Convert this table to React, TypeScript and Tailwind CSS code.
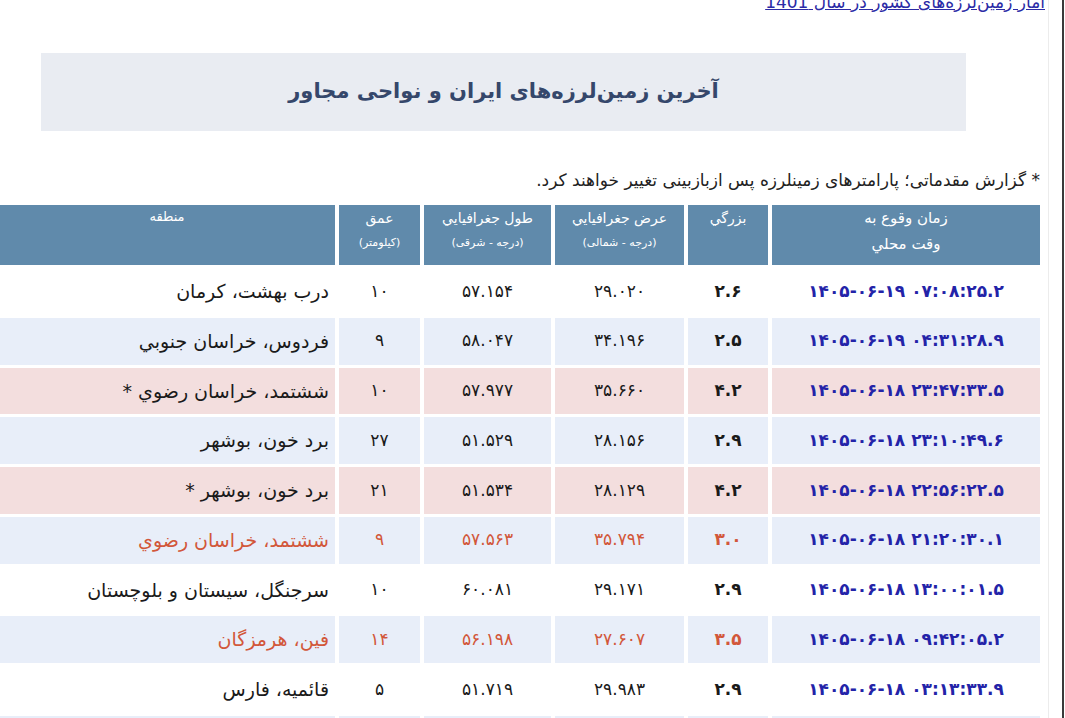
import React from "react";

type Row = {
  time: string;
  mag: string;
  lat: string;
  lon: string;
  depth: string;
  region: string;
  bg: "white" | "blue" | "pink";
  hot?: boolean;
};

const rows: Row[] = [
  { time: "۱۴۰۵-۰۶-۱۹ ۰۷:۰۸:۲۵.۲", mag: "۲.۶", lat: "۲۹.۰۲۰", lon: "۵۷.۱۵۴", depth: "۱۰", region: "درب بهشت، کرمان", bg: "white" },
  { time: "۱۴۰۵-۰۶-۱۹ ۰۴:۳۱:۲۸.۹", mag: "۲.۵", lat: "۳۴.۱۹۶", lon: "۵۸.۰۴۷", depth: "۹", region: "فردوس، خراسان جنوبي", bg: "blue" },
  { time: "۱۴۰۵-۰۶-۱۸ ۲۳:۴۷:۳۳.۵", mag: "۴.۲", lat: "۳۵.۶۶۰", lon: "۵۷.۹۷۷", depth: "۱۰", region: "ششتمد، خراسان رضوي *", bg: "pink" },
  { time: "۱۴۰۵-۰۶-۱۸ ۲۳:۱۰:۴۹.۶", mag: "۲.۹", lat: "۲۸.۱۵۶", lon: "۵۱.۵۲۹", depth: "۲۷", region: "برد خون، بوشهر", bg: "blue" },
  { time: "۱۴۰۵-۰۶-۱۸ ۲۲:۵۶:۲۲.۵", mag: "۴.۲", lat: "۲۸.۱۲۹", lon: "۵۱.۵۳۴", depth: "۲۱", region: "برد خون، بوشهر *", bg: "pink" },
  { time: "۱۴۰۵-۰۶-۱۸ ۲۱:۲۰:۳۰.۱", mag: "۳.۰", lat: "۳۵.۷۹۴", lon: "۵۷.۵۶۳", depth: "۹", region: "ششتمد، خراسان رضوي", bg: "blue", hot: true },
  { time: "۱۴۰۵-۰۶-۱۸ ۱۳:۰۰:۰۱.۵", mag: "۲.۹", lat: "۲۹.۱۷۱", lon: "۶۰.۰۸۱", depth: "۱۰", region: "سرجنگل، سيستان و بلوچستان", bg: "white" },
  { time: "۱۴۰۵-۰۶-۱۸ ۰۹:۴۲:۰۵.۲", mag: "۳.۵", lat: "۲۷.۶۰۷", lon: "۵۶.۱۹۸", depth: "۱۴", region: "فين، هرمزگان", bg: "blue", hot: true },
  { time: "۱۴۰۵-۰۶-۱۸ ۰۳:۱۳:۳۳.۹", mag: "۲.۹", lat: "۲۹.۹۸۳", lon: "۵۱.۷۱۹", depth: "۵", region: "قائميه، فارس", bg: "white" },
  { time: "", mag: "", lat: "", lon: "", depth: "", region: "", bg: "blue" },
];

const bgClass = (b: Row["bg"]) =>
  b === "white" ? "bg-white" : b === "blue" ? "bg-[#e8eef9]" : "bg-[#f3dede]";

export default function App() {
  return (
    <div
      className="relative h-[718px] w-[1065px] overflow-hidden bg-white"
      style={{ fontFamily: '"DejaVu Sans", "Noto Sans", sans-serif' }}
    >
      <div className="flex h-full">
        <div className="h-full w-[1049px] border-r border-[#ececec]" dir="rtl">
          <div className="mt-[-8px] pr-[3px] text-[17px] leading-[20px]">
            <a className="text-[#2b2ba6] underline" href="#">
              آمار زمین‌لرزه‌های کشور در سال <span dir="ltr">1401</span>
            </a>
          </div>
          <div className="mt-[41px] ml-[41px] mr-[82px] flex h-[78px] items-center justify-center bg-[#e9ecf2]">
            <h1 className="text-[21px] font-bold text-[#35476b]">آخرین زمین‌لرزه‌های ایران و نواحی مجاور</h1>
          </div>
          <p className="mt-[38px] pr-[8px] text-[17px] leading-[22px] text-[#222]">
            * گزارش مقدماتی؛ پارامترهای زمینلرزه پس ازبازبینی تغییر خواهند کرد.
          </p>
          <table className="mt-[11px] mr-[4px] w-[1049px] table-fixed border-separate border-spacing-x-[4px] border-spacing-y-[3px]">
            <thead>
              <tr className="h-[60px] bg-[#608aab] text-white">
                <th className="w-[268px] bg-[#608aab] align-top text-[15px] font-normal leading-[26px]">
                  زمان وقوع به
                  <br />
                  وقت محلي
                </th>
                <th className="w-[80px] bg-[#608aab] align-top pt-[2px] text-[14px] font-normal leading-[22px]">بزرگي</th>
                <th className="w-[129px] bg-[#608aab] align-top pt-[2px] text-[14px] font-normal leading-[22px]">
                  عرض جغرافیایي
                  <div className="mt-[7px] text-[11px] leading-[14px]">(درجه - شمالی)</div>
                </th>
                <th className="w-[127px] bg-[#608aab] align-top pt-[2px] text-[14px] font-normal leading-[22px]">
                  طول جغرافیایي
                  <div className="mt-[7px] text-[11px] leading-[14px]">(درجه - شرقی)</div>
                </th>
                <th className="w-[81px] bg-[#608aab] align-top pt-[2px] text-[14px] font-normal leading-[22px]">
                  عمق
                  <div className="mt-[7px] text-[11px] leading-[14px]">(کیلومتر)</div>
                </th>
                <th className="w-[336px] bg-[#608aab] align-top pt-[1px] text-[13px] font-normal leading-[22px]">منطقه</th>
              </tr>
            </thead>
            <tbody>
              {rows.map((r, i) => {
                const c = bgClass(r.bg);
                const txt = r.hot ? "text-[#d2573a]" : "text-[#1a1a1a]";
                return (
                  <tr key={i} className="h-[46.75px]">
                    <td className={`${c} text-center text-[17px] font-bold text-[#2323a8]`}>
                      <span dir="ltr">{r.time}</span>
                    </td>
                    <td className={`${c} text-center text-[17px] font-bold ${txt}`}>{r.mag}</td>
                    <td className={`${c} text-center text-[17px] ${txt}`}>{r.lat}</td>
                    <td className={`${c} text-center text-[17px] ${txt}`}>{r.lon}</td>
                    <td className={`${c} text-center text-[17px] ${txt}`}>{r.depth}</td>
                    <td className={`${c} pr-[6px] text-right text-[19px] ${txt}`}>{r.region}</td>
                  </tr>
                );
              })}
            </tbody>
          </table>
        </div>
        <div className="ml-[13px] h-full w-[2px] bg-[#3a3a3a]" />
      </div>
    </div>
  );
}
